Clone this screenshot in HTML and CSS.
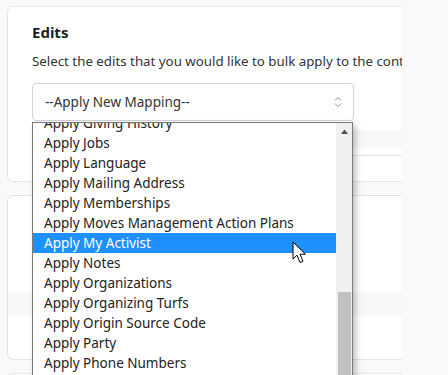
FILE: index.html
```html
<!DOCTYPE html>
<html lang="en">
<head>
    <meta charset="UTF-8">
    <title>Bulk Edits</title>
    <link rel="stylesheet" href="styles.css">
</head>
<body>
    <div class="layout">
        <div class="main">
            <div class="card card-edits">
                <h3 class="card-title">Edits</h3>
                <p class="card-text">Select the edits that you would like to bulk apply to the contacts in this list.</p>
                <div class="select-box">
                    <span>--Apply New Mapping--</span>
                    <svg class="select-arrows" width="8" height="12" viewBox="0 0 8 12">
                        <path d="M1 4.5 L4 1.5 L7 4.5 M1 7.5 L4 10.5 L7 7.5" fill="none" stroke="#8a8a8a" stroke-width="1"/>
                    </svg>
                </div>
                <div class="band"></div>
                <div class="rule"></div>
            </div>
            <div class="card card-second">
                <div class="band band-low"></div>
            </div>
            <div class="card card-third"></div>

            <div class="dropdown">
                <ul class="options">
                    <li>Apply Giving History</li>
                    <li>Apply Jobs</li>
                    <li>Apply Language</li>
                    <li>Apply Mailing Address</li>
                    <li>Apply Memberships</li>
                    <li>Apply Moves Management Action Plans</li>
                    <li class="selected">Apply My Activist</li>
                    <li>Apply Notes</li>
                    <li>Apply Organizations</li>
                    <li>Apply Organizing Turfs</li>
                    <li>Apply Origin Source Code</li>
                    <li>Apply Party</li>
                    <li>Apply Phone Numbers</li>
                </ul>
                <div class="scrollbar">
                    <svg class="scroll-up" width="7" height="5" viewBox="0 0 7 5">
                        <path d="M0 5 L3.5 0.5 L7 5 Z" fill="#505050"/>
                    </svg>
                    <div class="thumb"></div>
                </div>
            </div>

            <svg class="cursor" width="16" height="24" viewBox="0 0 16 24">
                <path d="M1 1 L1 18 L5 14.2 L8 21.5 L11 20.3 L8 13.2 L13.5 13.2 Z" fill="#fff" stroke="#000" stroke-width="1" stroke-linejoin="round"/>
            </svg>
        </div>
        <div class="side"></div>
    </div>
</body>
</html>
```

FILE: styles.css
```css
html, body {
    margin: 0;
    padding: 0;
}
body {
    width: 448px;
    height: 375px;
    overflow: hidden;
    background-color: #f8f9fa;
    font-family: "Noto Sans", "Open Sans", sans-serif;
    color: #212529;
}
.layout {
    display: flex;
    height: 375px;
}
.main {
    position: relative;
    width: 402px;
    overflow: hidden;
    padding: 6px 0 0 7px;
    box-sizing: border-box;
    background-color: #f8f9fa;
}
.side {
    flex: 1;
    background-color: #f8f9fb;
}
.card {
    width: 430px;
    box-sizing: border-box;
    background-color: #fff;
    border: 1px solid #e2e4e7;
    border-radius: 6px;
}
.card-edits {
    height: 176px;
    padding: 15px 0 0 24px;
}
.card-second {
    height: 165px;
    margin-top: 13px;
    padding-top: 96px;
}
.card-third {
    height: 40px;
    margin-top: 13px;
}
.card-title {
    margin: 0;
    font-size: 15px;
    font-weight: 700;
    line-height: 20px;
    color: #1b1f23;
}
.card-text {
    margin: 10px 0 0;
    font-size: 13.3px;
    line-height: 18px;
    color: #333;
    white-space: nowrap;
}
.select-box {
    display: flex;
    align-items: center;
    justify-content: space-between;
    width: 322px;
    height: 38px;
    margin-top: 13px;
    padding: 0 11px 0 12px;
    box-sizing: border-box;
    border: 1px solid #ced4da;
    border-radius: 4px;
    font-size: 13.5px;
    color: #333;
}
.band {
    height: 18px;
    margin-top: 9px;
    background-color: #f7f8fa;
}
.band-low {
    height: 24px;
    margin-top: 0;
}
.rule {
    margin-top: 7px;
    border-top: 1px solid #e2e4e7;
}

.dropdown {
    position: absolute;
    left: 32px;
    top: 122px;
    width: 321px;
    height: 270px;
    display: flex;
    box-sizing: border-box;
    border: 1px solid #7a7a7a;
    background-color: #fff;
    box-shadow: 3px 3px 6px rgba(0, 0, 0, 0.25);
    overflow: hidden;
}
.options {
    flex: 1;
    margin: -10px 0 0;
    padding: 0;
    list-style: none;
}
.options li {
    height: 20px;
    line-height: 20px;
    padding-left: 11px;
    font-size: 13.5px;
    color: #222;
    white-space: nowrap;
}
.options .selected {
    background-color: #1e90ff;
    color: #fff;
}
.scrollbar {
    position: relative;
    width: 16px;
    background-color: #f0f0f0;
}
.scroll-up {
    position: absolute;
    left: 5px;
    top: 6px;
}
.thumb {
    position: absolute;
    left: 2px;
    right: 1px;
    top: 169px;
    bottom: 0;
    background-color: #c1c1c1;
}
.cursor {
    position: absolute;
    left: 292px;
    top: 241px;
}
```
